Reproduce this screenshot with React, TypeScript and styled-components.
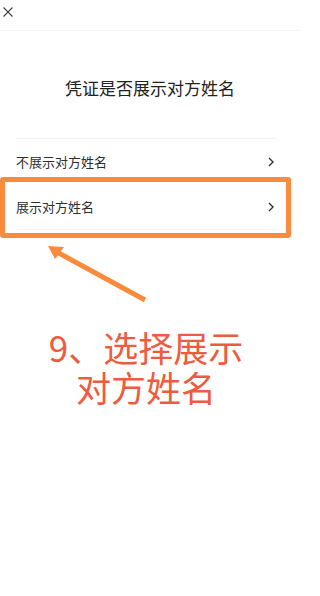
import React from "react";
import styled, { createGlobalStyle } from "styled-components";

const GlobalStyle = createGlobalStyle`
  html, body {
    margin: 0;
    padding: 0;
    background: #ffffff;
    font-family: "Noto Sans CJK SC", "Noto Sans", sans-serif;
  }
`;

const Page = styled.div`
  width: 300px;
  min-height: 596px;
  background: #ffffff;
`;

const TopBar = styled.div`
  height: 30px;
  display: flex;
  align-items: center;
  padding-left: 3px;
  border-bottom: 1px solid #f4f4f4;
`;

const CloseIcon = styled.svg`
  width: 10px;
  height: 10px;
  margin-top: -6px;
`;

const Title = styled.h1`
  margin: 45px 0 0;
  font-size: 17px;
  line-height: 24px;
  font-weight: 400;
  color: #222222;
  text-align: center;
`;

const List = styled.div`
  margin: 38px 23px 0 16px;
`;

const Row = styled.div<{ $top?: boolean; $bottom?: boolean }>`
  position: relative;
  height: 45px;
  display: flex;
  align-items: center;
  justify-content: space-between;
  border-top: ${(p) => (p.$top ? "1px solid #f2f2f2" : "none")};
  border-bottom: ${(p) => (p.$bottom ? "1px solid #f2f2f2" : "none")};
  font-size: 13px;
  color: #2e2e2e;
`;

const Chevron = styled.svg`
  width: 6px;
  height: 10px;
  margin-right: 3px;
`;

const Highlight = styled.div`
  position: absolute;
  left: -16px;
  right: -14px;
  top: -7px;
  bottom: -9px;
  border: 5px solid #fb8b3c;
  border-radius: 3px;
  pointer-events: none;
`;

const Arrow = styled.svg`
  display: block;
  margin: 9px 0 0 40px;
  width: 115px;
  height: 75px;
`;

const Caption = styled.div`
  margin-top: 13px;
  padding-right: 8px;
  font-size: 35px;
  line-height: 40px;
  color: #ee5b3d;
  text-align: center;
`;

const ChevronIcon = () => (
  <Chevron viewBox="0 0 6 10">
    <path d="M1 1 L5 5 L1 9" fill="none" stroke="#333" strokeWidth="1.4" />
  </Chevron>
);

export default function App() {
  return (
    <Page>
      <GlobalStyle />
      <TopBar>
        <CloseIcon viewBox="0 0 10 10">
          <path d="M0.5 0.5 L9.5 9.5 M9.5 0.5 L0.5 9.5" stroke="#444" strokeWidth="1.1" fill="none" />
        </CloseIcon>
      </TopBar>
      <Title>凭证是否展示对方姓名</Title>
      <List>
        <Row $top>
          不展示对方姓名
          <ChevronIcon />
        </Row>
        <Row $bottom>
          展示对方姓名
          <ChevronIcon />
          <Highlight />
        </Row>
      </List>
      <Arrow viewBox="40 240 115 75">
        <path d="M145 301 L55 252" stroke="#fb8b3c" strokeWidth="5" fill="none" />
        <path d="M48 247 L64 248 L55 260 Z" fill="#fb8b3c" />
      </Arrow>
      <Caption>
        9、选择展示
        <br />
        对方姓名
      </Caption>
    </Page>
  );
}
